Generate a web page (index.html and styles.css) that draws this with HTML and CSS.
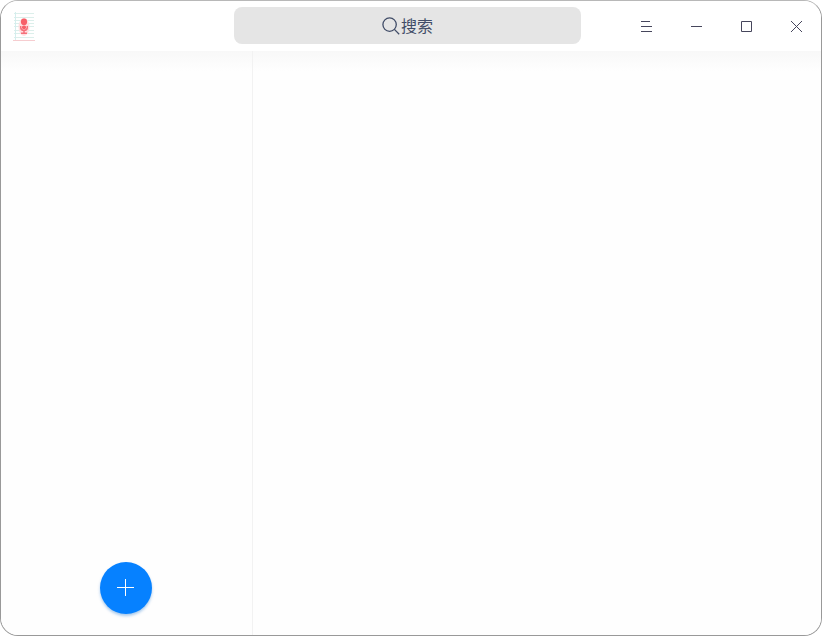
FILE: index.html
```html
<!DOCTYPE html>
<html lang="zh-CN">
<head>
<meta charset="utf-8">
<title>语音记事本</title>
<link rel="stylesheet" href="styles.css">
</head>
<body>
<div class="window">
  <header class="titlebar">
    <svg class="logo" width="24" height="30" viewBox="0 0 24 30">
      <path class="rule" d="M2 1.5h20M2 5.5h20M2 8.5h20M2 11.5h20M2 14.5h20M2 18.5h20M2 21.5h20M2 25.5h20"/>
      <path class="margin" d="M3.5 0v28"/>
      <path class="base" d="M1 28.5h22"/>
      <ellipse class="glow" cx="12" cy="15" rx="5.5" ry="9"/>
      <rect class="mic" x="9" y="6.5" width="6" height="6.5" rx="2.8"/>
      <rect class="mic" x="10" y="13.5" width="4" height="3.5" rx="1.5"/>
      <path class="stand" d="M8.7 14v1.4c0 3.8 6.6 3.8 6.6 0v-1.4M12 18v3M9 21.3h6"/>
    </svg>
    <div class="search">
      <svg width="18" height="18" viewBox="0 0 18 18"><circle cx="7.6" cy="7.6" r="6.7"/><path d="M12.4 12.4l4.8 4.8"/></svg>
      <span>搜索</span>
    </div>
    <div class="controls">
      <svg width="12" height="12" viewBox="0 0 12 12"><path d="M0 .5h9M0 5.5h11M0 10.5h11"/></svg>
      <svg width="12" height="12" viewBox="0 0 12 12"><path d="M0 5.5h11"/></svg>
      <svg width="12" height="12" viewBox="0 0 12 12"><path d="M.5 .5h10v10h-10z"/></svg>
      <svg width="12" height="12" viewBox="0 0 12 12"><path d="M0 0l11 11M11 0l-11 11"/></svg>
    </div>
  </header>
  <main class="content">
    <aside class="sidebar">
      <button class="add" aria-label="新建">
        <svg width="17" height="17" viewBox="0 0 17 17"><path d="M8.5 0v17M0 8.5h17"/></svg>
      </button>
    </aside>
    <section class="notes"></section>
  </main>
</div>
</body>
</html>
```
FILE: styles.css
```css
* { box-sizing: border-box; }
body { margin: 0; background: #fff; font-family: "Noto Sans CJK SC", sans-serif; }
svg { display: block; flex: none; fill: none; }
.window {
  width: 822px;
  height: 636px;
  display: flex;
  flex-direction: column;
  border: 1px solid #999;
  border-top-color: #b8b8b8;
  border-radius: 18px;
  background: #fefefe;
  overflow: hidden;
}
.titlebar {
  height: 50px;
  flex: none;
  display: flex;
  align-items: flex-start;
  background: #fff;
}
.logo { margin: 11px 0 0 11px; }
.rule { stroke: #dcefeb; }
.margin { stroke: #d5eeee; }
.base { stroke: #f6cdd0; }
.glow { fill: #ffdfe0; }
.mic { fill: #f75f68; }
.stand { stroke: #f5707a; stroke-width: 1.5; }
.search {
  width: 347px;
  height: 37px;
  margin: 6px 0 0 198px;
  display: flex;
  align-items: center;
  justify-content: center;
  gap: 1px;
  border-radius: 8px;
  background: #e5e5e5;
  color: #414d68;
  font-size: 16px;
  line-height: 37px;
}
.search svg { stroke: #414d68; stroke-width: 1.3; }
.controls {
  display: flex;
  gap: 38px;
  margin: 20px 0 0 60px;
}
.controls svg { stroke: #46465c; }
.content {
  flex: 1;
  display: flex;
  background: linear-gradient(#f8f8f8, #fefefe 20px);
}
.sidebar {
  width: 252px;
  display: flex;
  align-items: flex-end;
  padding: 0 0 21px 99px;
  border-right: 1px solid #f2f2f2;
}
.notes { flex: 1; }
.add {
  width: 52px;
  height: 52px;
  padding: 0 1px 1px 0;
  display: flex;
  align-items: center;
  justify-content: center;
  border: 0;
  border-radius: 50%;
  background: #0681ff;
  box-shadow: 0 2px 3px rgba(0, 100, 200, .35);
}
.add svg { stroke: #fff; }
```
